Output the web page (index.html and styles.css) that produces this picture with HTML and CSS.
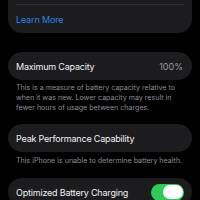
FILE: index.html
```html
<!DOCTYPE html>
<html>
<head>
<meta charset="utf-8">
<link rel="stylesheet" href="styles.css">
</head>
<body>
<div class="page">
  <div class="card card-first">
    <div class="row row-hidden"></div>
    <div class="sep"></div>
    <div class="row"><span class="link">Learn More</span></div>
  </div>

  <div class="card card-gap">
    <div class="row"><span class="title">Maximum Capacity</span><span class="value">100%</span></div>
  </div>
  <p class="footer footer-1">This is a measure of battery capacity relative to when it was new. Lower capacity may result in fewer hours of usage between charges.</p>

  <div class="card card-gap2">
    <div class="row"><span class="title">Peak Performance Capability</span></div>
  </div>
  <p class="footer footer-2">This iPhone is unable to determine battery health.</p>

  <div class="card card-gap3">
    <div class="row"><span class="title">Optimized Battery Charging</span><span class="toggle"><span class="knob"></span></span></div>
  </div>
</div>
</body>
</html>
```
FILE: styles.css
```css
html, body {
  margin: 0;
  padding: 0;
  background: #000;
}
body {
  width: 200px;
  height: 200px;
  overflow: hidden;
  font-family: Inter, "Noto Sans", sans-serif;
  -webkit-font-smoothing: antialiased;
}
.page {
  padding: 0 8px;
}
.card {
  background: #1c1c1e;
  border-radius: 14px;
  overflow: hidden;
}
.card-first {
  margin-top: -20px;
}
.card-gap {
  margin-top: 19px;
}
.card-gap2 {
  margin-top: 11px;
}
.card-gap3 {
  margin-top: 12px;
}
.row {
  height: 28px;
  display: flex;
  align-items: center;
  justify-content: space-between;
  padding: 0 8px;
}
.row-hidden {
  height: 24px;
}
.sep {
  height: 1px;
  margin: 0 8px;
  background: #2c2c2e;
}
.link {
  color: #2f82e0;
  font-size: 9px;
  letter-spacing: -0.15px;
}
.title {
  color: #f0f0f2;
  font-size: 9px;
  letter-spacing: -0.2px;
}
.value {
  color: #9a9a9f;
  font-size: 9px;
  margin-right: 1px;
}
.footer {
  margin: 0;
  padding: 3px 10px 0 8px;
  color: #8d8d93;
  font-size: 7.1px;
  line-height: 10px;
}
.footer-2 {
  padding-top: 4px;
  padding-right: 0;
  margin-right: -8px;
}
.toggle {
  width: 33px;
  height: 17px;
  border-radius: 9px;
  background: #30c95a;
  display: flex;
  align-items: center;
  justify-content: flex-end;
  padding-right: 1px;
  box-sizing: border-box;
}
.knob {
  width: 20px;
  height: 14px;
  border-radius: 7px;
  background: #fff;
}
```
